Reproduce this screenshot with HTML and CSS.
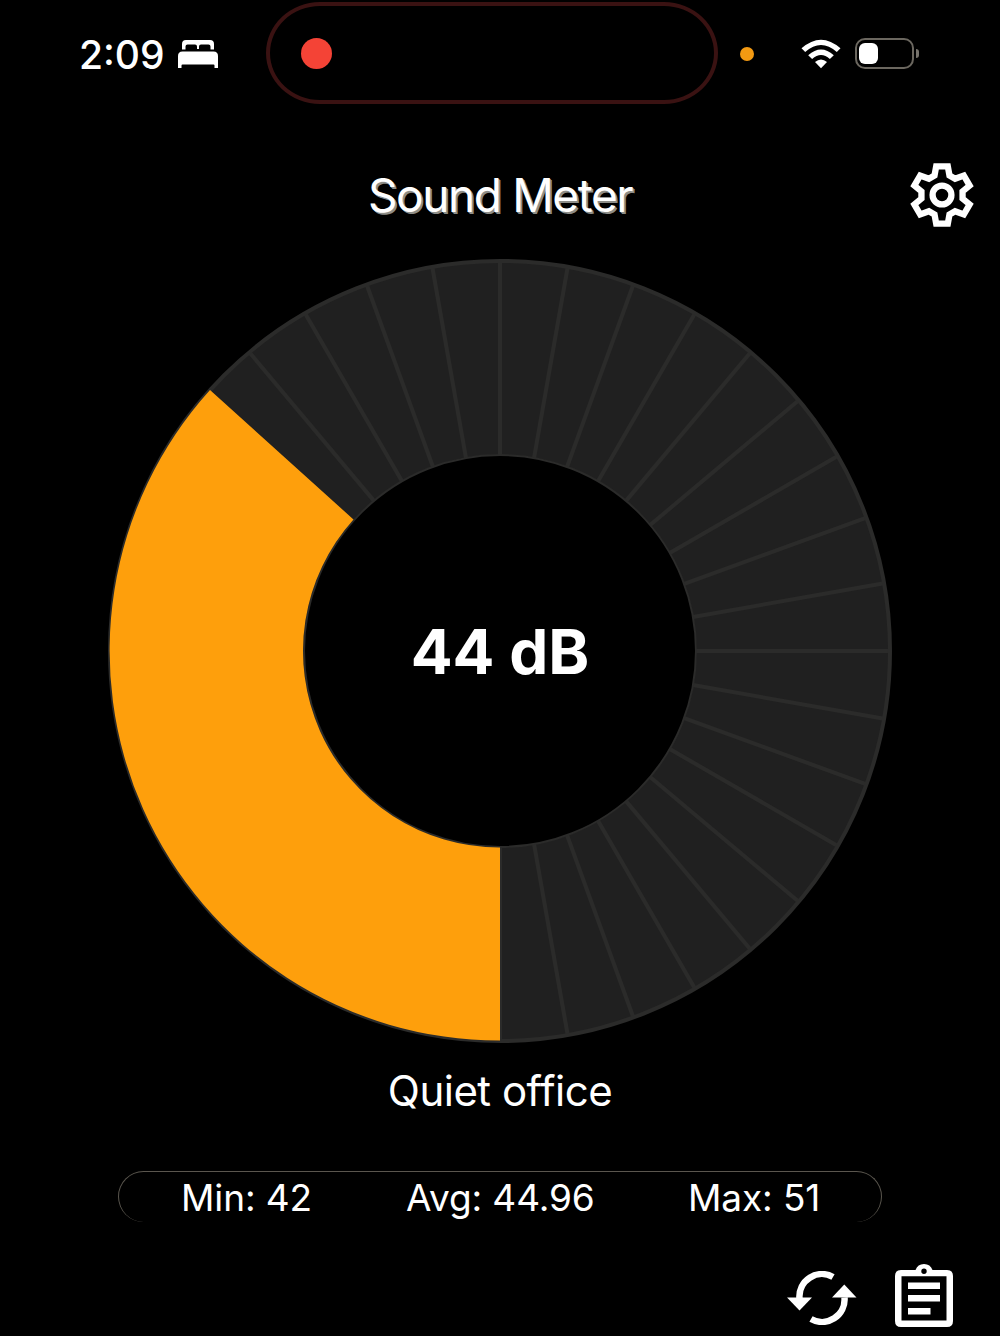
FILE: index.html
```html
<!DOCTYPE html>
<html lang="en">
<head>
  <meta charset="UTF-8">
  <meta name="viewport" content="width=device-width, initial-scale=1.0">
  <title>Sound Meter</title>
  <link rel="stylesheet" href="styles.css">
</head>
<body>

  <div class="status">
    <div class="status-left">
      <span class="time">2:09</span>
      <svg class="bed" viewBox="0 0 40 28">
        <path d="M4 9.500V4Q4 0 8 0H32Q36 0 36 4V9.500H32.500V6.500Q32.500 4.500 30.500 4.500H23Q21 4.500 21 6.500V9H19V6.500Q19 4.500 17 4.500H9.500Q7.500 4.500 7.500 6.500V9.500Z"/>
        <path d="M0 28V16Q0 11.500 4.500 11.500H35.500Q40 11.500 40 16V28H36.500V25.500Q36.500 24.500 35.500 24.500H4.500Q3.500 24.500 3.500 25.500V28Z"/>
      </svg>
    </div>
    <div class="island"><span class="rec"></span></div>
    <div class="status-right">
      <span class="mic"></span>
      <svg class="wifi" viewBox="0 0 40 30">
        <path d="M0.500 9.300Q20 -8 39.500 9.300L35.800 13Q20 -1 4.200 13Z"/>
        <path d="M7.200 16.200Q20 5 32.800 16.200L28.900 20Q20 12 11.100 20Z"/>
        <path d="M14 23Q20 18 26 23L20 29.200Z"/>
      </svg>
      <div class="battery"><span class="level"></span></div>
      <span class="cap"></span>
    </div>
  </div>

  <div class="header">
    <h1>Sound Meter</h1>
    <svg class="gear" viewBox="0 0 66 66">
      <path d="M27 3.500H39L40.700 12.800L46.500 16.200L55.500 12.900L61.500 23.300L54.200 29.300V36.700L61.500 42.700L55.500 53.100L46.500 49.800L40.700 53.200L39 62.500H27L25.300 53.200L19.500 49.800L10.500 53.100L4.500 42.700L11.800 36.700V29.300L4.500 23.300L10.500 12.900L19.500 16.200L25.300 12.800Z"/>
      <circle cx="33" cy="33" r="9.700"/>
    </svg>
  </div>

  <div class="meter">
    <svg class="dial" viewBox="-393 -393 786 786">
      <circle class="ring" r="293.500"/>
      <g class="ticks" id="ticks"></g>
      <circle class="edge" r="390"/>
      <circle class="edge inner" r="196"/>
      <path class="value" d="M0 389.500A389.500 389.500 0 0 1 -290 -261L-146.500 -131.500A196.500 196.500 0 0 0 0 196.500Z"/>
    </svg>
    <div class="reading">44 dB</div>
  </div>

  <p class="label">Quiet office</p>

  <div class="stats">
    <span class="min">Min: 42</span>
    <span class="avg">Avg: 44.96</span>
    <span class="max">Max: 51</span>
  </div>

  <div class="actions">
    <svg class="refresh" viewBox="0 0 70 54">
      <path class="arc" d="M12.500 27.500A22.500 22.500 0 0 1 46 6"/>
      <path class="arc" d="M57.500 26.500A22.500 22.500 0 0 1 24 48"/>
      <path d="M0 26.500H25L12.500 39.500Z"/>
      <path d="M45 26.500H69.500L57.300 13.500Z"/>
    </svg>
    <svg class="clipboard" viewBox="0 0 58 64">
      <path fill-rule="evenodd" d="M6 7H20.500A9 9 0 0 1 37.500 7H52Q58 7 58 13V58Q58 64 52 64H6Q0 64 0 58V13Q0 7 6 7ZM6.500 13.200V57.500H51.500V13.200ZM29 5.600A2.700 2.700 0 1 0 29 11A2.700 2.700 0 1 0 29 5.600Z"/>
      <path d="M13 19.500H45V26H13ZM13 32H45V38.500H13ZM13 45H35.500V51.500H13Z"/>
    </svg>
  </div>

  <script>
    // one divider every 10 degrees
    var html = ''
    for (var i = 0; i < 36; i++) {
      html += '<line y1="-196" y2="-390" transform="rotate(' + i * 10 + ')"/>'
    }
    document.querySelector('#ticks').innerHTML = html
  </script>
</body>
</html>
```

FILE: styles.css
```css
* {
  margin: 0;
  padding: 0;
  box-sizing: border-box;
}

body {
  height: 1336px;
  background-color: #000;
  color: #fff;
  font-family: Inter, "Liberation Sans", sans-serif;
  overflow: hidden;
}

svg {
  display: block;
  fill: #fff;
}

.status {
  height: 107px;
  display: grid;
  grid-template-columns: 266px 452px 282px;
}

.status-left {
  display: flex;
  align-items: center;
  padding-left: 79px;
}

.time {
  width: 99px;
  padding-top: 1px;
  font-size: 39px;
  font-weight: 500;
  white-space: nowrap;
}

.bed {
  width: 40px;
  height: 28px;
  margin-top: 1px;
}

.island {
  height: 102px;
  margin-top: 2px;
  padding-left: 31px;
  display: flex;
  align-items: center;
  border: 4px solid #3a1212;
  border-radius: 54px / 51px;
}

.rec {
  width: 31px;
  height: 31px;
  border-radius: 50%;
  background-color: #f44336;
}

.status-right {
  display: flex;
  align-items: center;
  padding-left: 22px;
}

.mic {
  width: 14px;
  height: 14px;
  border-radius: 50%;
  background-color: #f39a12;
}

.wifi {
  width: 40px;
  height: 30px;
  margin-left: 47px;
}

.battery {
  width: 59px;
  height: 31px;
  margin-left: 14px;
  padding: 3px 2px;
  border: 2px solid #6b675f;
  border-radius: 10px;
}

.level {
  display: block;
  width: 19px;
  height: 21px;
  border-radius: 6px;
  background-color: #fff;
}

.cap {
  width: 3px;
  height: 9px;
  margin-left: 2px;
  border-radius: 0 4px 4px 0;
  background-color: #77736c;
}

.header {
  height: 151px;
  padding-top: 53px;
  display: grid;
  grid-template-columns: 1fr 264px 1fr;
}

h1 {
  grid-column: 2;
  height: 70px;
  line-height: 70px;
  font-size: 46px;
  font-weight: 400;
  letter-spacing: -1.4px;
  white-space: nowrap;
  text-shadow: 1px 1px 0 #8d8d88, 2px 2px 0 #8d8d88;
}

.gear {
  width: 64px;
  height: 64px;
  margin: 3px 26px 0 auto;
  fill: none;
  stroke: #fff;
  stroke-width: 6.5;
}

.meter {
  width: 786px;
  height: 786px;
  margin: 0 auto;
  display: grid;
  place-items: center;
}

.dial,
.reading {
  grid-area: 1 / 1;
}

.dial {
  width: 786px;
  height: 786px;
}

.ring {
  fill: none;
  stroke: #202020;
  stroke-width: 194;
}

.ticks,
.edge {
  fill: none;
  stroke: #2b2b2a;
  stroke-width: 4;
}

.inner {
  stroke-width: 2;
}

.value {
  fill: #fe9f0c;
}

.reading {
  font-size: 62px;
  font-weight: 700;
  white-space: nowrap;
}

.label {
  height: 127px;
  padding-top: 12px;
  line-height: 70px;
  font-size: 42px;
  font-weight: 400;
  letter-spacing: -0.5px;
  text-align: center;
}

.stats {
  width: 764px;
  height: 51px;
  margin: 0 118px;
  display: flex;
  line-height: 51px;
  font-size: 37px;
  font-weight: 400;
  letter-spacing: -0.1px;
  white-space: nowrap;
  border: 1px solid #5a564e;
  border-bottom: 0;
  border-radius: 26px;
}

.min {
  width: 225px;
  margin-left: 62px;
}

.avg {
  width: 282px;
}

.actions {
  display: flex;
  align-items: flex-end;
  justify-content: flex-end;
  gap: 38px;
  height: 105px;
  padding-right: 47px;
}

.refresh {
  width: 70px;
  height: 54px;
  margin-bottom: 2px;
}

.arc {
  fill: none;
  stroke: #fff;
  stroke-width: 6.5;
}

.clipboard {
  width: 58px;
  height: 64px;
}
```
